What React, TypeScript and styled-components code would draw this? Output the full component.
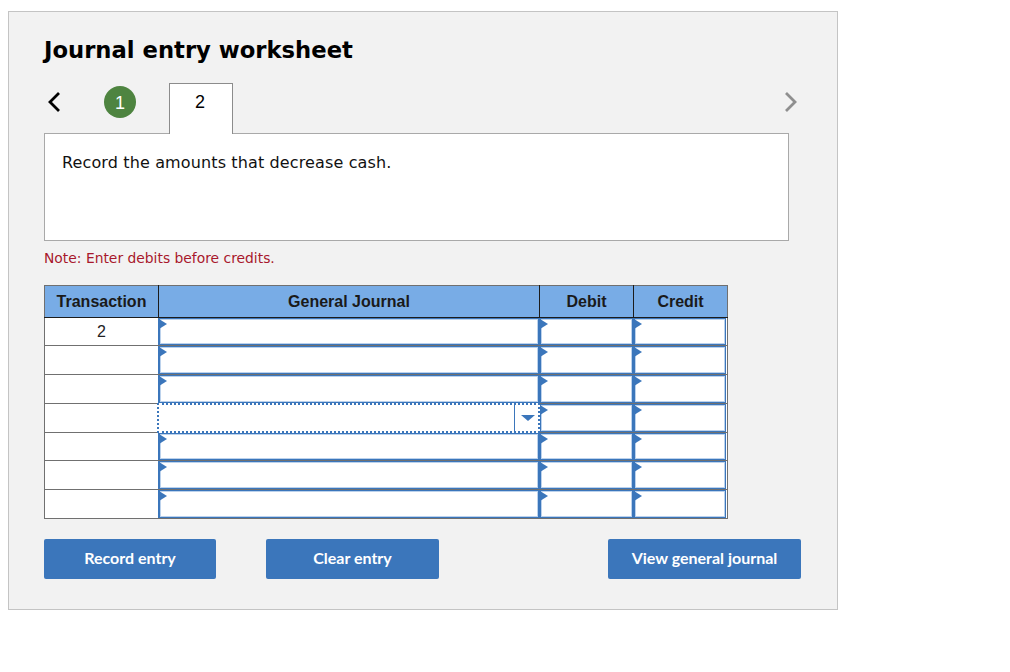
import React from "react";
import styled, { createGlobalStyle } from "styled-components";

const Global = createGlobalStyle`
  html, body { margin: 0; padding: 0; background: #fff; }
  body { padding: 11px 8px 0; font-family: "DejaVu Sans", sans-serif; color: #000; }
`;

const Panel = styled.div`
  box-sizing: border-box;
  width: 830px;
  height: 599px;
  background: #f2f2f2;
  border: 1px solid #c4c4c4;
  padding: 23px 35px 0;
`;

const Title = styled.h1`
  margin: 0;
  height: 32px;
  font: bold 22.7px/31px "DejaVu Sans", sans-serif;
  color: #000;
`;

const TabBar = styled.div`
  display: flex;
  align-items: flex-start;
  height: 50px;
  margin-top: 16px;
  position: relative;
  z-index: 1;
`;

const Chevron = styled.svg<{ $muted?: boolean }>`
  display: block;
  width: 14px;
  height: 22px;
  flex: none;
  margin-top: 8px;
  fill: none;
  stroke: ${(p) => (p.$muted ? "#8f8f8f" : "#000")};
  stroke-width: 2.8;
`;

const PrevWrap = styled.div`
  margin-left: 3px;
  flex: none;
`;

const Done = styled.div`
  width: 32px;
  height: 32px;
  border-radius: 50%;
  background: #4e8440;
  color: #fff;
  font: 18px/34px "Liberation Sans", sans-serif;
  text-align: center;
  margin: 3px 0 0 43px;
  flex: none;
`;

const ActiveTab = styled.div`
  box-sizing: border-box;
  width: 64px;
  height: 51px;
  margin-left: 33px;
  padding-right: 2px;
  background: #fff;
  border: 1px solid #8c8c8c;
  border-bottom: 0;
  font: 18px/37px "Liberation Sans", sans-serif;
  text-align: center;
  flex: none;
`;

const Spacer = styled.div`
  flex: 1;
`;

const NextWrap = styled.div`
  margin-right: 4px;
`;

const Prompt = styled.div`
  box-sizing: border-box;
  width: 745px;
  height: 108px;
  background: #fff;
  border: 1px solid #a9a9a9;
  padding: 18px 17px 0;
  font: 16px/22px "DejaVu Sans", sans-serif;
  letter-spacing: 0.13px;
  color: #111;
`;

const Note = styled.div`
  margin-top: 8px;
  font: 13.86px/18px "DejaVu Sans", sans-serif;
  color: #a8182c;
`;

const Table = styled.table`
  margin-top: 18px;
  border-collapse: collapse;
  table-layout: fixed;
  width: 684px;
  background: #fff;
  border: 1px solid #707070;
`;

const Head = styled.th<{ $w: number }>`
  box-sizing: border-box;
  width: ${(p) => p.$w}px;
  height: 32px;
  padding: 0;
  background: #78ace6;
  border-left: 1px solid #1c1c1c;
  border-bottom: 1px solid #1c1c1c;
  font: bold 16px/30px "Liberation Sans", sans-serif;
  color: #1a1a1a;
  &:first-child { border-left: 0; }
`;

const Row = styled.tr<{ $h: number }>`
  height: ${(p) => p.$h}px;
`;

const TxCell = styled.td`
  box-sizing: border-box;
  padding: 0;
  border-bottom: 1px solid #707070;
  border-right: 1px solid #707070;
  text-align: center;
  vertical-align: middle;
  font: 16px/20px "Liberation Sans", sans-serif;
  color: #222;
`;

const EntryCell = styled.td`
  padding: 0;
  position: relative;
  border-bottom: 1px solid #707070;
`;

const Field = styled.div`
  position: absolute;
  inset: 0 1px 0 -1px;
  box-sizing: border-box;
  background: #fff;
  border-style: solid;
  border-color: #3b76bb;
  border-width: 1px 1px 1px 2px;
  box-shadow: inset 1px 1px 0 #bcd2ec, inset -1px -1px 0 #bcd2ec;
  &::before {
    content: "";
    position: absolute;
    left: -1px;
    top: 0;
    border-left: 8px solid #3b76bb;
    border-top: 5px solid transparent;
    border-bottom: 5px solid transparent;
  }
`;

const Focused = styled.div`
  position: absolute;
  inset: -1px 0 -1px -2px;
  z-index: 2;
  background: #fff;
  border: 2px dotted #3b76bb;
`;

const Divider = styled.div`
  position: absolute;
  right: 23px;
  top: 0;
  bottom: 0;
  width: 1px;
  background: #3b76bb;
`;

const Caret = styled.div`
  position: absolute;
  right: 3px;
  top: 10px;
  border-top: 6px solid #3b76bb;
  border-left: 7px solid transparent;
  border-right: 7px solid transparent;
`;

const Actions = styled.div`
  display: flex;
  width: 757px;
  margin-top: 20px;
`;

const Button = styled.button<{ $w: number; $gap: number }>`
  width: ${(p) => p.$w}px;
  height: 40px;
  margin-left: ${(p) => p.$gap}px;
  padding: 0 0 3px;
  border: 0;
  border-radius: 2px;
  background: #3b76bb;
  color: #fff;
  font: bold 16px/36px Lato, sans-serif;
  text-align: center;
`;

const rows = [
  { h: 28, tx: "2" },
  { h: 29, tx: "" },
  { h: 29, tx: "" },
  { h: 29, tx: "", focus: true },
  { h: 28, tx: "" },
  { h: 29, tx: "" },
  { h: 29, tx: "" },
];

export default function App() {
  return (
    <>
      <Global />
      <Panel>
        <Title>Journal entry worksheet</Title>
        <TabBar>
          <PrevWrap>
            <Chevron viewBox="0 0 14 22">
              <path d="M12 2 L3 11 L12 20" />
            </Chevron>
          </PrevWrap>
          <Done>1</Done>
          <ActiveTab>2</ActiveTab>
          <Spacer />
          <NextWrap>
            <Chevron $muted viewBox="0 0 14 22">
              <path d="M2 2 L11 11 L2 20" />
            </Chevron>
          </NextWrap>
        </TabBar>
        <Prompt>Record the amounts that decrease cash.</Prompt>
        <Note>Note: Enter debits before credits.</Note>
        <Table>
          <thead>
            <tr>
              <Head $w={114}>Transaction</Head>
              <Head $w={381}>General Journal</Head>
              <Head $w={94}>Debit</Head>
              <Head $w={94}>Credit</Head>
            </tr>
          </thead>
          <tbody>
            {rows.map((r, i) => (
              <Row key={i} $h={r.h}>
                <TxCell>{r.tx}</TxCell>
                <EntryCell>
                  {r.focus ? (
                    <Focused>
                      <Divider />
                      <Caret />
                    </Focused>
                  ) : (
                    <Field />
                  )}
                </EntryCell>
                <EntryCell><Field /></EntryCell>
                <EntryCell><Field /></EntryCell>
              </Row>
            ))}
          </tbody>
        </Table>
        <Actions>
          <Button $w={172} $gap={0}>Record entry</Button>
          <Button $w={173} $gap={50}>Clear entry</Button>
          <Button $w={193} $gap={169}>View general journal</Button>
        </Actions>
      </Panel>
    </>
  );
}
